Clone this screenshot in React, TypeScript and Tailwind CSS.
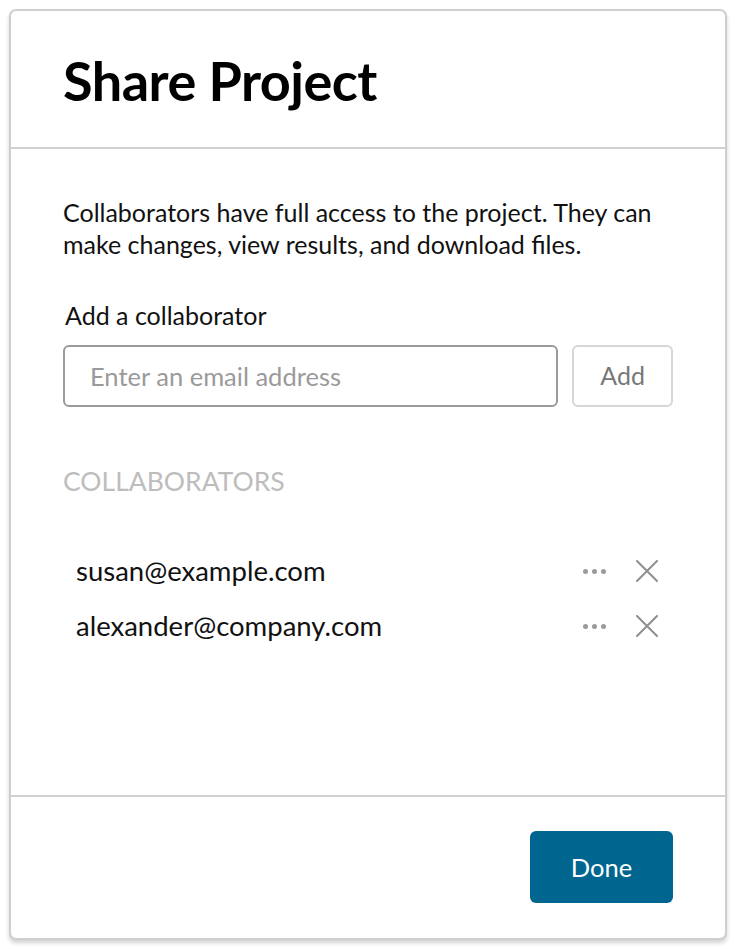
const collaborators = ["susan@example.com", "alexander@company.com"];

function Dots() {
  return (
    <div className="flex gap-[4px]">
      <span className="h-[5px] w-[5px] rounded-full bg-[#9a9a9a]" />
      <span className="h-[5px] w-[5px] rounded-full bg-[#9a9a9a]" />
      <span className="h-[5px] w-[5px] rounded-full bg-[#9a9a9a]" />
    </div>
  );
}

function Close() {
  return (
    <svg width="22" height="22" viewBox="0 0 22 22" fill="none" stroke="#8f8f8f" strokeWidth="2" strokeLinecap="round">
      <path d="M1 1L21 21M21 1L1 21" />
    </svg>
  );
}

export default function App() {
  return (
    <div className="min-h-screen bg-white p-[9px] pr-[8px]" style={{ fontFamily: "Lato, 'Noto Sans', sans-serif" }}>
      <div className="flex h-[931px] flex-col rounded-[7px] border-2 border-[#cfcfcf] bg-white shadow-[0_3px_4px_rgba(0,0,0,0.18)]">
        {/* Header */}
        <div className="h-[138px] border-b-2 border-[#d0d0d0] pl-[52px] pt-[40px]">
          <h1 className="text-[54px] font-bold leading-[60px] tracking-[-0.5px] text-black">Share Project</h1>
        </div>

        {/* Body */}
        <div className="flex-1 px-[52px] pt-[47px]">
          <p className="text-[25px] leading-[32px] text-[#111]">
            Collaborators have full access to the project. They can make changes, view results, and download files.
          </p>

          <label className="mt-[39px] block pl-[2px] text-[25px] leading-[32px] text-[#111]">Add a collaborator</label>

          <div className="mt-[14px] flex gap-[14px]">
            <input
              className="h-[62px] w-[496px] rounded-[6px] border-2 border-[#9a9a9a] px-[25px] text-[25.5px] text-[#333] outline-none placeholder:text-[#9a9a9a]"
              placeholder="Enter an email address"
            />
            <button className="h-[62px] w-[101px] rounded-[6px] border-2 border-[#d6d6d6] text-[25px] text-[#777]">Add</button>
          </div>

          <div className="mt-[58px] text-[26.5px] uppercase leading-[32px] text-[#bdbdbd]">Collaborators</div>

          <ul className="mt-[58px] flex flex-col gap-[23px] pl-[13px] pr-[15px]">
            {collaborators.map((email) => (
              <li key={email} className="flex items-center justify-between">
                <span className="text-[27.5px] leading-[32px] text-[#111]">{email}</span>
                <div className="flex items-center gap-[30px]">
                  <Dots />
                  <Close />
                </div>
              </li>
            ))}
          </ul>
        </div>

        {/* Footer */}
        <div className="flex h-[143px] justify-end border-t-2 border-[#d0d0d0] pr-[52px] pt-[34px]">
          <button className="h-[72px] w-[143px] rounded-[6px] bg-[#00668f] text-[25.5px] text-white">Done</button>
        </div>
      </div>
    </div>
  );
}
